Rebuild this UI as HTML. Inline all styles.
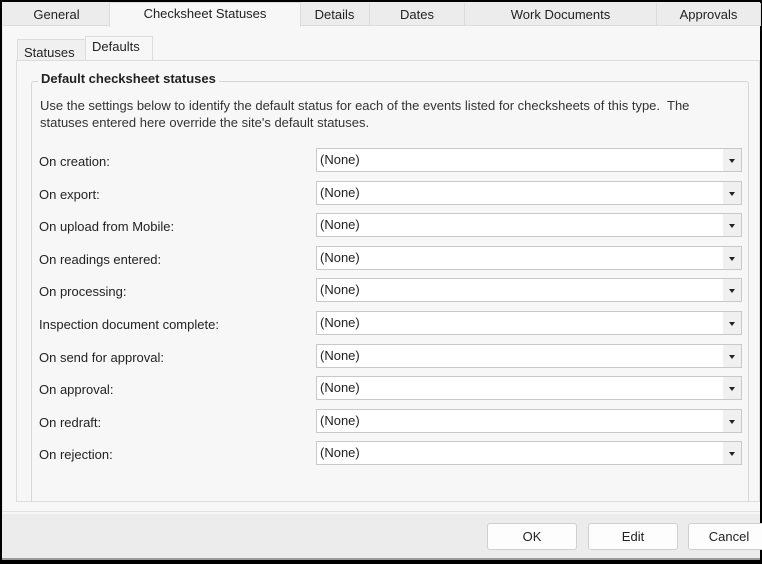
<html><head><style>
body{margin:0;width:762px;height:564px;overflow:hidden;background:#000;font-family:"Liberation Sans",sans-serif;font-size:13px;color:#222}
#w{position:absolute;left:2px;top:2px;width:758px;height:557px;background:#ececec}
.t{position:absolute;top:1px;height:22px;line-height:24px;text-align:center;border-right:1px solid #dcdcdc;background:#ececec;border-bottom:1px solid #dcdcdc}
.a{background:#f7f7f7;top:0;height:24px;line-height:22px;border:1px solid #dcdcdc;border-bottom:none}
#p{position:absolute;left:1px;top:24px;width:757px;height:488px;background:#f7f7f7}
.s{position:absolute;top:11px;height:22px;line-height:26px;padding:0 6px;border:1px solid #dcdcdc;border-bottom:none;background:#f0f0f0}
#sp{position:absolute;left:13px;top:34px;width:742px;height:440px;border:1px solid #dcdcdc;background:#f7f7f7}
#g{position:absolute;left:14px;top:20px;width:716px;height:420px;border:1px solid #d6d6d6;border-bottom:none;border-radius:3px 3px 0 0}
#gt{position:absolute;left:6px;top:-11px;background:#f7f7f7;padding:0 3px;font-weight:bold;font-size:13px}
.d{position:absolute;left:8px;top:15px;width:700px;line-height:17px;color:#333}
.c{position:absolute;background:#fff;border:1px solid #c8c8c8;line-height:21px;padding-left:3px;box-sizing:border-box;width:426px;height:24px}
.c:after{content:"";position:absolute;right:0;top:0;width:18px;height:22px;background:#f0f0f0}
.c i{position:absolute;right:6px;top:10px;border:3px solid transparent;border-top:4px solid #222;z-index:2}
.b{position:absolute;top:523px;width:88px;height:25px;background:#fdfdfd;border:1px solid #d0d0d0;border-radius:3px;text-align:center;line-height:25px}
</style></head><body><div id="w">
<div class="t" style="left:1px;width:107px">General</div>
<div class="t" style="left:298px;width:69px">Details</div>
<div class="t" style="left:368px;width:94px">Dates</div>
<div class="t" style="left:463px;width:191px">Work Documents</div>
<div class="t" style="left:655px;width:103px">Approvals</div>
<div id="p">
<div class="s" style="left:14px;width:55px;top:13px;height:21px">Statuses</div>
<div class="s" style="left:82px;width:54px;background:#f7f7f7;line-height:20px;top:10px;height:24px">Defaults</div>
<div id="sp"><div id="g"><div id="gt">Default checksheet statuses</div>
<div class="d">Use the settings below to identify the default status for each of the events listed for checksheets of this type.&nbsp; The statuses entered here override the site's default statuses.</div>
</div></div>
</div>
<div class="t a" style="left:107px;width:190px">Checksheet Statuses</div>
</div>
<div id="rows"></div>
<div class="b" style="left:487px">OK</div>
<div class="b" style="left:588px">Edit</div>
<div class="b" style="left:688px;width:80px">Cancel</div>
<div style="position:absolute;left:2px;top:558px;width:758px;height:2px;background:#9a9a9a"></div>
<div style="position:absolute;left:2px;top:511px;width:758px;height:1px;background:#e0e0e0"></div>
<script>
var L=["On creation:","On export:","On upload from Mobile:","On readings entered:","On processing:","Inspection document complete:","On send for approval:","On approval:","On redraft:","On rejection:"],h="";
L.forEach(function(t,i){var y=148+i*32.6;h+='<div style="position:absolute;left:39px;top:'+(y+6)+'px">'+t+'</div><div class="c" style="left:316px;top:'+y+'px">(None)<i></i></div>';});
document.getElementById("rows").innerHTML=h;
</script>
</body></html>
